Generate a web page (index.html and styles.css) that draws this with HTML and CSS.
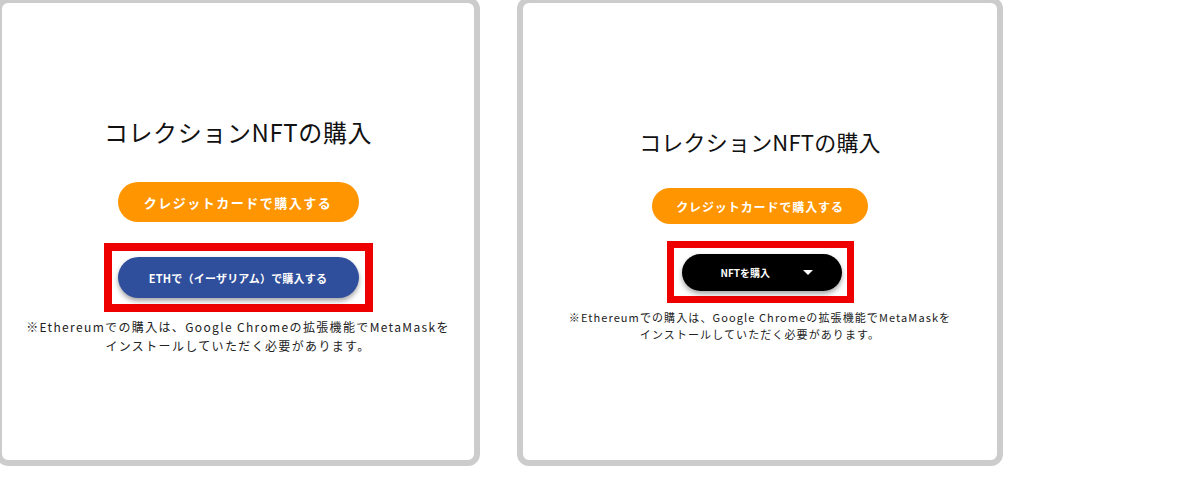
FILE: index.html
```html
<!DOCTYPE html>
<html lang="ja">
<head>
    <meta charset="UTF-8">
    <title>コレクションNFTの購入</title>
    <link rel="stylesheet" href="styles.css">
</head>
<body>
    <div class="cards">
        <div class="card card-large">
            <h1 class="card-title">コレクションNFTの購入</h1>
            <a class="btn btn-card" href="#">クレジットカードで購入する</a>
            <div class="highlight">
                <a class="btn btn-eth" href="#">ETHで（イーザリアム）で購入する</a>
            </div>
            <p class="note">
                ※Ethereumでの購入は、Google Chromeの拡張機能でMetaMaskを<br>
                インストールしていただく必要があります。
            </p>
        </div>

        <div class="card card-small">
            <h1 class="card-title">コレクションNFTの購入</h1>
            <a class="btn btn-card" href="#">クレジットカードで購入する</a>
            <div class="highlight">
                <a class="btn btn-nft" href="#">
                    <span>NFTを購入</span>
                    <span class="caret"></span>
                </a>
            </div>
            <p class="note">
                ※Ethereumでの購入は、Google Chromeの拡張機能でMetaMaskを<br>
                インストールしていただく必要があります。
            </p>
        </div>
    </div>
</body>
</html>
```

FILE: styles.css
```css
* {
    margin: 0;
    padding: 0;
    box-sizing: border-box;
}

body {
    font-family: 'Noto Sans CJK JP', 'Noto Sans', sans-serif;
    background-color: #fff;
    color: #111;
    overflow: hidden;
}

.cards {
    display: flex;
    gap: 37px;
    margin-top: -3px;
    margin-left: -4px;
}

.card {
    display: flex;
    flex-direction: column;
    align-items: center;
    height: 469px;
    border: 6px solid #cccccc;
    border-radius: 12px;
    background: #fff;
}

.card-title {
    font-weight: 400;
    line-height: 1.5;
    color: #111;
}

.btn {
    display: flex;
    align-items: center;
    justify-content: center;
    color: #fff;
    font-weight: 700;
    text-decoration: none;
    border-radius: 999px;
}

.btn-card {
    background-color: #ff9500;
}

.highlight {
    border: 8px solid #ee0000;
}

.btn-eth {
    background-color: #2f4e9b;
    box-shadow: 0 3px 5px rgba(0, 0, 0, 0.35);
}

.btn-nft {
    background-color: #000;
    box-shadow: 0 3px 5px rgba(0, 0, 0, 0.35);
    justify-content: flex-start;
}

.caret {
    width: 0;
    height: 0;
    border-left: 5px solid transparent;
    border-right: 5px solid transparent;
    border-top: 5px solid #fff;
}

.note {
    text-align: center;
    color: #222;
}

/* 左のカード */
.card-large {
    width: 484px;
    padding-top: 111px;
}

.card-large .card-title {
    font-size: 24px;
    letter-spacing: 0.6px;
}

.card-large .btn-card {
    width: 241px;
    height: 40px;
    margin-top: 32px;
    font-size: 13px;
    letter-spacing: 1.5px;
}

.card-large .highlight {
    margin-top: 21px;
    padding: 6px;
}

.card-large .btn-eth {
    width: 241px;
    height: 41px;
    font-size: 11px;
    letter-spacing: 0.2px;
}

.card-large .note {
    margin-top: 5px;
    font-size: 12px;
    line-height: 19px;
    letter-spacing: 1.35px;
}

/* 右のカード */
.card-small {
    width: 486px;
    padding-top: 122px;
}

.card-small .card-title {
    font-size: 22px;
    letter-spacing: 0.2px;
}

.card-small .btn-card {
    width: 216px;
    height: 36px;
    margin-top: 30px;
    font-size: 12px;
    letter-spacing: 0.9px;
}

.card-small .highlight {
    margin-top: 17px;
    border-width: 7px;
    padding: 6px 5px 5px 8px;
}

.card-small .btn-nft {
    width: 160px;
    height: 37px;
    padding-left: 39px;
    font-size: 10px;
}

.card-small .caret {
    margin-left: 33px;
}

.card-small .note {
    margin-top: 6px;
    font-size: 11px;
    line-height: 17px;
    letter-spacing: 1.1px;
}
```
